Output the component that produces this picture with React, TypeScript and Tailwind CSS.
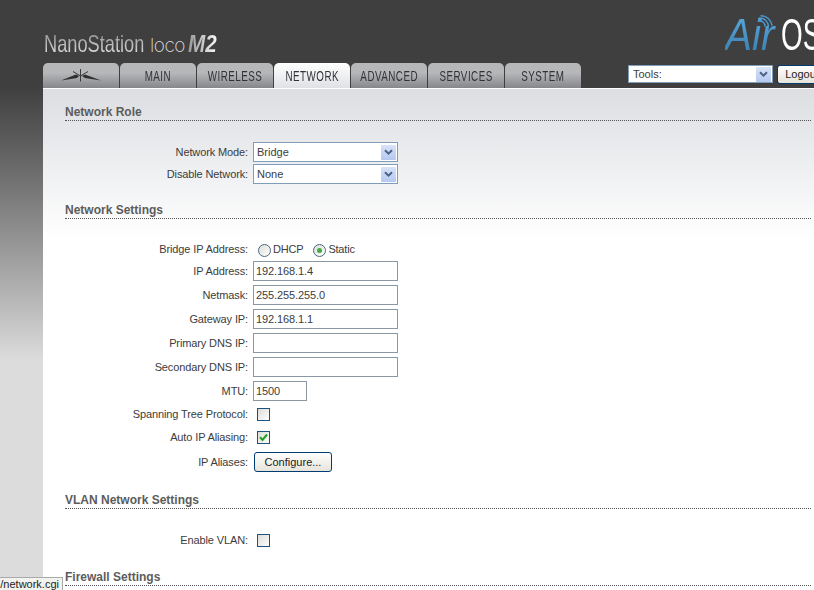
import type { ReactNode } from 'react';

const tabs = ['MAIN', 'WIRELESS', 'NETWORK', 'ADVANCED', 'SERVICES', 'SYSTEM'];

function Arrow() {
  return (
    <span className="flex h-[15px] w-[15px] items-center justify-center rounded-[1px] bg-linear-to-b from-[#d8e3f8] to-[#b4c8f0]">
      <svg width="9" height="7" viewBox="0 0 9 7">
        <path d="M1 1.2 4.5 4.6 8 1.2" fill="none" stroke="#4d6185" strokeWidth="2" />
      </svg>
    </span>
  );
}

function Select({ value }: { value: string }) {
  return (
    <div className="flex h-[20px] w-[145px] items-center justify-between border border-[#7f9db9] bg-white pr-[1px] pl-[3px]">
      <span>{value}</span>
      <Arrow />
    </div>
  );
}

function Row({ label, h, children }: { label: string; h: string; children: ReactNode }) {
  return (
    <div className={`flex items-center gap-[5px] ${h}`}>
      <label className="w-[183px] text-right tracking-[-0.12px]">{label}</label>
      {children}
    </div>
  );
}

function TextInput({ value = '', small }: { value?: string; small?: boolean }) {
  return (
    <input
      readOnly
      value={value}
      className={`h-[20px] border border-[#8b98a3] bg-white px-[2px] tracking-[-0.1px] outline-none ${small ? 'w-[54px]' : 'w-[145px]'}`}
    />
  );
}

function Check({ checked }: { checked?: boolean }) {
  return (
    <span className="ml-[4px] flex h-[13px] w-[13px] items-center justify-center border border-[#1c5180] bg-linear-to-br from-[#dcdcd7] to-white">
      {checked && (
        <svg width="9" height="9" viewBox="0 0 9 9">
          <path d="M1 4.2 3.5 7 8 1.5" fill="none" stroke="#21a121" strokeWidth="2" />
        </svg>
      )}
    </span>
  );
}

function Radio({ checked, label }: { checked?: boolean; label: string }) {
  return (
    <span className="flex items-center gap-[2px] tracking-[-0.2px]">
      <span className="mt-[2px] flex h-[13px] w-[13px] items-center justify-center rounded-full border border-[#4a6a85] bg-linear-to-br from-[#dcdcd7] to-white">
        {checked && <span className="h-[5px] w-[5px] rounded-full bg-[#3fae3f]" />}
      </span>
      {label}
    </span>
  );
}

function Heading({ title, className }: { title: string; className: string }) {
  return (
    <h2 className={`h-[16px] border-b border-dotted border-[#555] text-[12px] leading-[14px] font-bold text-[#5c5c5c] ${className}`}>
      {title}
    </h2>
  );
}

function UbntLogo() {
  return (
    <svg width="42" height="16" viewBox="0 0 42 16" fill="#2e2e2e">
      <path d="M1 12.500 16 6.500 19 8 17 10ZM41 12.500 25 6.500 22 8 25 10Z" />
      <path d="M20.500 8V1M20.500 8 13 3.500M20.500 8 28 3.500M20.500 8V13.500" stroke="#3a3a3a" strokeWidth="1" fill="none" />
    </svg>
  );
}

export default function App() {
  return (
    <div className="relative h-[590px] w-[814px] overflow-hidden bg-linear-to-b from-[#3f3f3f] from-[85px] to-[#dcdcdc] to-[360px] font-['Liberation_Sans',Arial,sans-serif] text-[11px] text-[#3c3c3c]">
      <div className="h-[88px] bg-[#3f3f3f] pl-[43px]">
        <div className="flex h-[63px] items-end justify-between">
          <div className="mb-[5px] ml-[1px] flex items-baseline">
            <span className="mr-[-25px] inline-block w-[131px] origin-left scale-x-[0.76] bg-linear-to-b from-[#8f8f8f] to-[#e4e4e4] bg-clip-text text-[24px] leading-[24px] font-medium whitespace-nowrap text-transparent">
              NanoStation
            </span>
            <span className="mr-[3px] font-['Inter',sans-serif] text-[19px] leading-[24px] font-extralight tracking-[-0.5px] text-[#ddd]">
              loco
            </span>
            <span className="inline-block origin-left scale-x-[0.86] bg-linear-to-r from-[#999] to-white bg-clip-text pr-[3px] text-[24px] leading-[24px] font-bold text-transparent italic">
              M2
            </span>
          </div>
          <div className="mb-[8px] flex w-[89px] shrink-0 items-end text-[45px] leading-[40px]">
            <span className="relative w-[56px] shrink-0">
              <span className="inline-block origin-left scale-x-[0.9] bg-linear-to-b from-[#5aa8dc] to-[#3a7fb0] bg-clip-text pr-[6px] text-transparent italic">
                Air
              </span>
              <svg className="absolute top-0 left-[32px]" width="16" height="16" viewBox="0 0 18 18" fill="none" stroke="#4a97cc" strokeWidth="1.700">
                <path d="M1 7A6 6 0 0 1 9 13M2 3.500A10 10 0 0 1 13 13M4 .8A13 13 0 0 1 17 12" />
              </svg>
            </span>
            <span className="inline-block origin-left scale-x-[0.62] text-white">OS</span>
          </div>
        </div>
        <div className="flex h-[25px]">
          <nav className="flex gap-[1px]">
            <a className="flex w-[76px] items-center justify-center rounded-t-[5px] bg-linear-to-b from-[#b6b7b9] via-[#b6b7b9] via-40% to-[#85878b]">
              <UbntLogo />
            </a>
            {tabs.map((tab) => (
              <a
                key={tab}
                className={`flex w-[76px] items-center justify-center rounded-t-[5px] ${
                  tab === 'NETWORK'
                    ? 'bg-linear-to-b from-white to-[#dfe1e5]'
                    : 'bg-linear-to-b from-[#b6b7b9] via-[#b6b7b9] via-40% to-[#85878b]'
                }`}
              >
                <span className="mt-[1px] inline-block scale-x-[0.7] text-[14px] tracking-[0.7px] whitespace-nowrap text-[#2f3236]">{tab}</span>
              </a>
            ))}
          </nav>
          <div className="mt-[2px] ml-[47px] flex shrink-0 gap-[4px]">
            <div className="flex h-[18px] w-[145px] items-center justify-between border border-[#7f9db9] bg-white pr-[1px] pl-[4px]">
              <span>Tools:</span>
              <Arrow />
            </div>
            <button className="h-[19px] w-[70px] rounded-[3px] border border-[#003c74] bg-linear-to-b from-white to-[#e6e4da] pr-[20px] text-[#222]">
              Logout
            </button>
          </div>
        </div>
      </div>

      <main className="ml-[43px] h-[502px] border-t border-white bg-linear-to-b from-[#dcdee2] to-white to-[150px] pt-[16px] pr-[3px] pl-[22px]">
        <Heading title="Network Role" className="" />
        <div className="mt-[20px]">
          <Row label="Network Mode:" h="h-[22px]"><Select value="Bridge" /></Row>
          <Row label="Disable Network:" h="h-[22px]"><Select value="None" /></Row>
        </div>

        <Heading title="Network Settings" className="mt-[18px]" />
        <div className="mt-[20px]">
          <Row label="Bridge IP Address:" h="h-[20px]">
            <span className="ml-[5px] flex gap-[10px]">
              <Radio label="DHCP" />
              <Radio label="Static" checked />
            </span>
          </Row>
          <Row label="IP Address:" h="h-[24px]"><TextInput value="192.168.1.4" /></Row>
          <Row label="Netmask:" h="h-[24px]"><TextInput value="255.255.255.0" /></Row>
          <Row label="Gateway IP:" h="h-[24px]"><TextInput value="192.168.1.1" /></Row>
          <Row label="Primary DNS IP:" h="h-[24px]"><TextInput /></Row>
          <Row label="Secondary DNS IP:" h="h-[24px]"><TextInput /></Row>
          <Row label="MTU:" h="h-[24px]"><TextInput value="1500" small /></Row>
          <Row label="Spanning Tree Protocol:" h="h-[23px]"><Check /></Row>
          <Row label="Auto IP Aliasing:" h="h-[23px]"><Check checked /></Row>
          <Row label="IP Aliases:" h="h-[26px]">
            <button className="ml-[1px] h-[20px] w-[78px] rounded-[3px] border border-[#003c74] bg-linear-to-b from-white to-[#e6e4da] text-[#222]">
              Configure...
            </button>
          </Row>
        </div>

        <Heading title="VLAN Network Settings" className="mt-[18px]" />
        <div className="mt-[19px]">
          <Row label="Enable VLAN:" h="h-[24px]"><Check /></Row>
        </div>

        <Heading title="Firewall Settings" className="mt-[18px]" />
      </main>

      <div className="absolute bottom-0 left-0 flex h-[13px] w-[63px] items-center justify-end border-t border-r border-[#aaa] bg-[#f2f2ee] pr-[3px] text-[11px] text-[#222]">
        <span className="whitespace-nowrap">/network.cgi</span>
      </div>
    </div>
  );
}
